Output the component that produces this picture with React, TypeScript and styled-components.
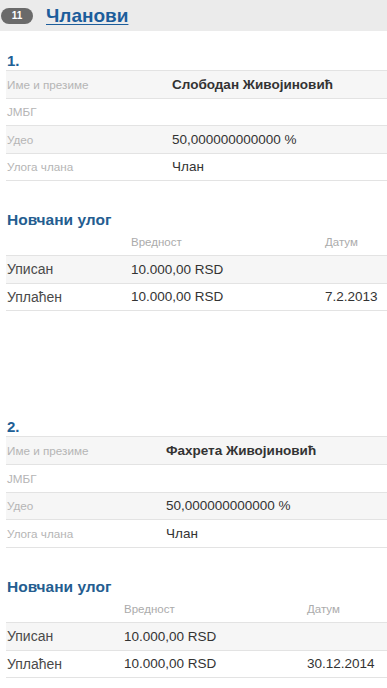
import React from 'react'
import styled, { createGlobalStyle } from 'styled-components'

const GlobalStyle = createGlobalStyle`
  body {
    margin: 0;
    background: #fff;
    font-family: 'Liberation Sans', Arial, sans-serif;
  }
`

const Page = styled.div`
  width: 387px;
  overflow: hidden;
`

const Header = styled.div`
  height: 31px;
  background: #ebebeb;
  display: flex;
  align-items: center;
  padding-left: 1px;
  gap: 13px;
`

const Badge = styled.span`
  width: 32px;
  height: 16px;
  border-radius: 8px;
  background: #6a6a6a;
  color: #fff;
  font-size: 10px;
  font-weight: bold;
  display: flex;
  align-items: center;
  justify-content: center;
`

const Title = styled.a`
  font-size: 19px;
  font-weight: bold;
  color: #1c5d9b;
  text-decoration: underline;
  text-underline-offset: 2px;
`

const Member = styled.section<{ $top: number }>`
  padding-left: 6px;
  margin-top: ${({ $top }) => $top}px;
`

const MemberNo = styled.div`
  font-size: 15px;
  font-weight: bold;
  line-height: 16px;
  color: #1e6096;
  padding-left: 1px;
  margin-bottom: 1px;
`

const Table = styled.div<{ $bordered?: boolean }>`
  width: 381px;
  border-top: ${({ $bordered }) => ($bordered ? '1px solid #e3e3e3' : 'none')};
`

const Row = styled.div<{ $cols: string; $h: number; $shade?: boolean }>`
  display: grid;
  grid-template-columns: ${({ $cols }) => $cols};
  align-items: center;
  height: ${({ $h }) => $h}px;
  border-bottom: 1px solid #e3e3e3;
  background: ${({ $shade }) => ($shade ? '#f6f6f6' : '#fff')};
`

const HeadRow = styled(Row)`
  background: #fff;
`

const Label = styled.span`
  font-size: 11.7px;
  color: #b5b5b5;
  padding-left: 1px;
`

const Value = styled.span<{ $bold?: boolean }>`
  font-size: 13.5px;
  color: #333;
  font-weight: ${({ $bold }) => ($bold ? 'bold' : 'normal')};
`

const MoneyTitle = styled.h3<{ $top: number }>`
  margin: ${({ $top }) => $top}px 0 0;
  font-size: 15.5px;
  line-height: 18px;
  font-weight: bold;
  color: #245d90;
  padding-left: 1px;
`

const ColHead = styled.span`
  font-size: 11.5px;
  color: #ababab;
`

const MoneyLabel = styled.span`
  font-size: 14px;
  color: #4a4a4a;
  padding-left: 1px;
`

type Member = {
  no: string
  name: string
  share: string
  role: string
  labelCol: number
  moneyCols: [number, number]
  rowH: number
  date: string
  top: number
}

const members: Member[] = [
  {
    no: '1.',
    name: 'Слободан Живојиновић',
    share: '50,000000000000 %',
    role: 'Члан',
    labelCol: 166,
    moneyCols: [125, 194],
    rowH: 26.5,
    date: '7.2.2013',
    top: 22,
  },
  {
    no: '2.',
    name: 'Фахрета Живојиновић',
    share: '50,000000000000 %',
    role: 'Члан',
    labelCol: 160,
    moneyCols: [118, 183],
    rowH: 26.75,
    date: '30.12.2014',
    top: 108,
  },
]

function MemberBlock({ m }: { m: Member }) {
  const cols = `${m.labelCol}px 1fr`
  const moneyCols = `${m.moneyCols[0]}px ${m.moneyCols[1]}px 1fr`
  return (
    <Member $top={m.top}>
      <MemberNo>{m.no}</MemberNo>
      <Table $bordered>
        <Row $cols={cols} $h={m.rowH} $shade>
          <Label>Име и презиме</Label>
          <Value $bold>{m.name}</Value>
        </Row>
        <Row $cols={cols} $h={m.rowH}>
          <Label>ЈМБГ</Label>
          <Value />
        </Row>
        <Row $cols={cols} $h={m.rowH} $shade>
          <Label>Удео</Label>
          <Value>{m.share}</Value>
        </Row>
        <Row $cols={cols} $h={m.rowH}>
          <Label>Улога члана</Label>
          <Value>{m.role}</Value>
        </Row>
      </Table>

      <MoneyTitle $top={30}>Новчани улог</MoneyTitle>
      <Table>
        <HeadRow $cols={moneyCols} $h={26}>
          <span />
          <ColHead>Вредност</ColHead>
          <ColHead>Датум</ColHead>
        </HeadRow>
        <Row $cols={moneyCols} $h={26.5} $shade>
          <MoneyLabel>Уписан</MoneyLabel>
          <Value>10.000,00 RSD</Value>
          <Value />
        </Row>
        <Row $cols={moneyCols} $h={26.5}>
          <MoneyLabel>Уплаћен</MoneyLabel>
          <Value>10.000,00 RSD</Value>
          <Value>{m.date}</Value>
        </Row>
      </Table>
    </Member>
  )
}

export default function App() {
  return (
    <Page>
      <GlobalStyle />
      <Header>
        <Badge>11</Badge>
        <Title>Чланови</Title>
      </Header>
      {members.map((m) => (
        <MemberBlock key={m.no} m={m} />
      ))}
    </Page>
  )
}
